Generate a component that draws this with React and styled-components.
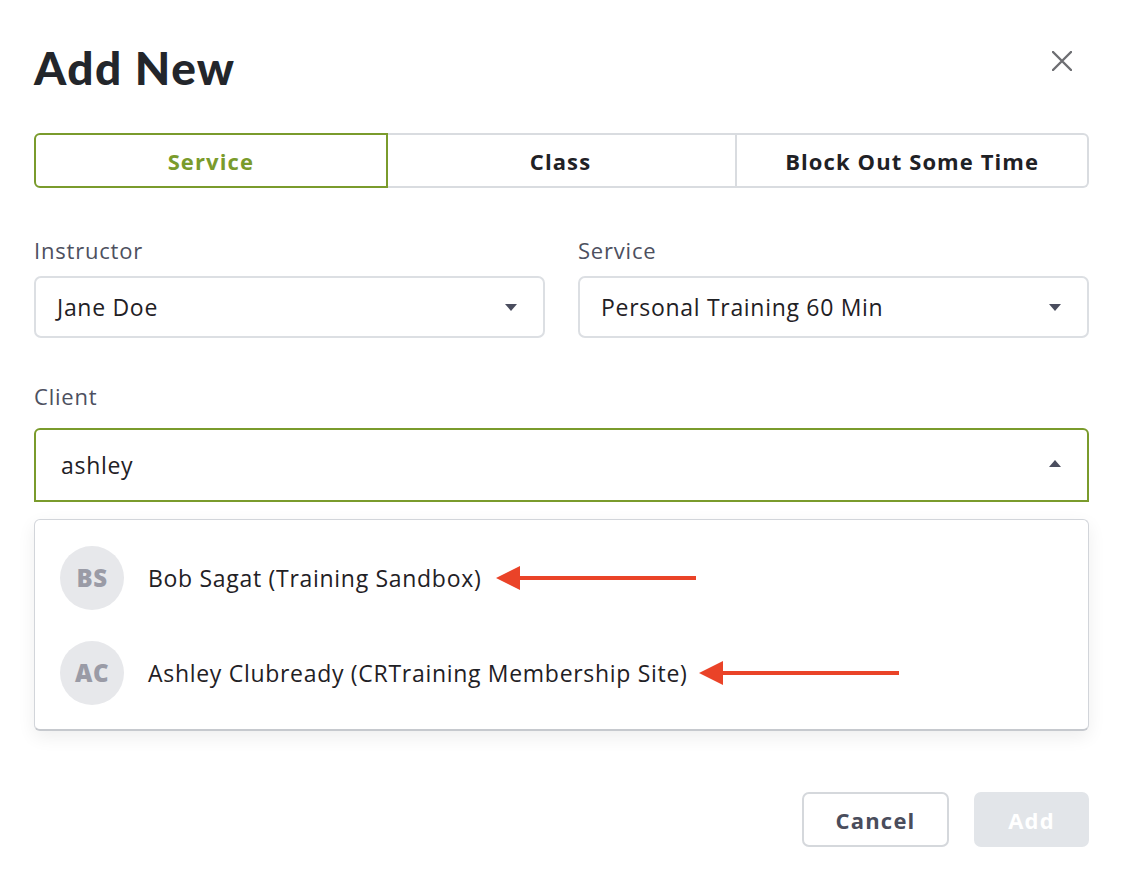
import styled, { createGlobalStyle } from 'styled-components'

const GlobalStyle = createGlobalStyle`
  body {
    margin: 0;
    background: #ffffff;
    font-family: "Open Sans", Lato, "Liberation Sans", sans-serif;
  }
  * {
    box-sizing: border-box;
  }
`

const Modal = styled.div`
  width: 1122px;
  min-height: 880px;
  padding: 40px 33px 0 34px;
  display: flex;
  flex-direction: column;
`

const Header = styled.div`
  display: flex;
  justify-content: space-between;
  align-items: center;
  height: 54px;
`

const Title = styled.h1`
  margin: 0;
  font-family: Lato, "Open Sans", sans-serif;
  font-size: 46px;
  font-weight: 900;
  color: #23262b;
  letter-spacing: 1.4px;
`

const CloseButton = styled.button`
  border: none;
  background: none;
  padding: 0;
  margin: -12px 16px 0 0;
  width: 22px;
  height: 22px;
  display: flex;
  align-items: center;
  justify-content: center;
  cursor: pointer;
`

const Tabs = styled.div`
  display: grid;
  grid-template-columns: repeat(3, 1fr);
  margin-top: 39px;
`

const Tab = styled.button`
  height: 55px;
  font-family: inherit;
  font-size: 22px;
  font-weight: 700;
  letter-spacing: 1.1px;
  background: #ffffff;
  color: ${(p) => (p.$active ? '#7a9b2c' : '#1f2125')};
  border: 2px solid ${(p) => (p.$active ? '#7a9b2c' : '#d9dce0')};
  border-left-width: ${(p) => (p.$first ? '2px' : '0')};
  border-radius: ${(p) => (p.$first ? '6px 0 0 6px' : p.$last ? '0 6px 6px 0' : '0')};
  position: relative;
  z-index: ${(p) => (p.$active ? 1 : 0)};
  margin-right: ${(p) => (p.$active ? '-2px' : '0')};
`

const FieldRow = styled.div`
  display: grid;
  grid-template-columns: 1fr 1fr;
  column-gap: 33px;
  margin-top: 49px;
`

const Field = styled.div`
  display: flex;
  flex-direction: column;
  margin-top: ${(p) => p.$top || '0'};
`

const Label = styled.label`
  font-size: 22px;
  line-height: 26px;
  letter-spacing: 0.8px;
  color: #4d5060;
  margin-bottom: ${(p) => p.$gap || '13px'};
`

const Select = styled.div`
  height: 62px;
  border: 2px solid #dcdfe3;
  border-radius: 7px;
  display: flex;
  align-items: center;
  justify-content: space-between;
  padding: 0 26px 0 21px;
  font-size: 23px;
  letter-spacing: 0.7px;
  color: #1f2125;
`

const SearchBox = styled.div`
  height: 74px;
  border: 2px solid #7a9b2c;
  border-radius: 6px 6px 0 0;
  display: flex;
  align-items: center;
  justify-content: space-between;
  padding: 0 26px 0 25px;
  font-size: 23px;
  letter-spacing: 0.7px;
  color: #1f2125;
`

const Caret = styled.span`
  width: 0;
  height: 0;
  border-left: 6px solid transparent;
  border-right: 6px solid transparent;
  ${(p) =>
    p.$up
      ? 'border-bottom: 7px solid #4a4d5e; margin-top: -4px;'
      : 'border-top: 7px solid #4a4d5e;'}
`

const Menu = styled.div`
  margin-top: 17px;
  border: 1px solid #d2d5da;
  border-bottom: 2px solid #c6c9ce;
  border-radius: 6px;
  padding: 10px 0 9px;
  background: #ffffff;
  box-shadow: 0 6px 18px rgba(0, 0, 0, 0.07);
`

const Option = styled.div`
  height: 95px;
  display: flex;
  align-items: center;
  padding-left: 25px;
  font-size: 23px;
  letter-spacing: 0.7px;
  color: #1f2125;
`

const Avatar = styled.div`
  width: 64px;
  height: 64px;
  border-radius: 50%;
  background: #e7e8eb;
  color: #9a9ba6;
  font-size: 24px;
  font-weight: 800;
  letter-spacing: 0.5px;
  display: flex;
  align-items: center;
  justify-content: center;
  margin-right: 24px;
  flex-shrink: 0;
`

const Arrow = styled.svg`
  margin-left: ${(p) => p.$gap || '14px'};
  flex-shrink: 0;
`

const Footer = styled.div`
  display: flex;
  justify-content: flex-end;
  gap: 25px;
  margin-top: 61px;
`

const Button = styled.button`
  height: 55px;
  width: ${(p) => p.$width};
  font-family: inherit;
  font-size: 22px;
  font-weight: 700;
  letter-spacing: 1.2px;
  border-radius: 7px;
  border: 2px solid ${(p) => (p.$primary ? '#e2e5e9' : '#d5d8dc')};
  background: ${(p) => (p.$primary ? '#e2e5e9' : '#ffffff')};
  color: ${(p) => (p.$primary ? '#ffffff' : '#4a4d5c')};
`

const RedArrow = ({ length, gap }) => (
  <Arrow $gap={gap} width={length} height="26" viewBox={`0 0 ${length} 26`}>
    <polygon points="0,13 24,1 24,25" fill="#ea4328" />
    <rect x="22" y="11" width={length - 22} height="4" fill="#ea4328" />
  </Arrow>
)

const clients = [
  { initials: 'BS', name: 'Bob Sagat (Training Sandbox)', arrow: 200, gap: '15px' },
  { initials: 'AC', name: 'Ashley Clubready (CRTraining Membership Site)', arrow: 200, gap: '11px' },
]

export default function App() {
  return (
    <>
      <GlobalStyle />
      <Modal>
        <Header>
          <Title>Add New</Title>
          <CloseButton aria-label="Close">
            <svg width="20" height="20" viewBox="0 0 20 20">
              <path d="M1 1 L19 19 M19 1 L1 19" stroke="#6d6e72" strokeWidth="2.4" strokeLinecap="round" />
            </svg>
          </CloseButton>
        </Header>

        <Tabs>
          <Tab $active $first>Service</Tab>
          <Tab>Class</Tab>
          <Tab $last>Block Out Some Time</Tab>
        </Tabs>

        <FieldRow>
          <Field>
            <Label>Instructor</Label>
            <Select>
              Jane Doe
              <Caret />
            </Select>
          </Field>
          <Field>
            <Label>Service</Label>
            <Select>
              Personal Training 60 Min
              <Caret />
            </Select>
          </Field>
        </FieldRow>

        <Field $top="45px">
          <Label $gap="19px">Client</Label>
          <SearchBox>
            ashley
            <Caret $up />
          </SearchBox>
          <Menu>
            {clients.map((c) => (
              <Option key={c.initials}>
                <Avatar>{c.initials}</Avatar>
                {c.name}
                <RedArrow length={c.arrow} gap={c.gap} />
              </Option>
            ))}
          </Menu>
        </Field>

        <Footer>
          <Button $width="147px">Cancel</Button>
          <Button $primary $width="115px">Add</Button>
        </Footer>
      </Modal>
    </>
  )
}
